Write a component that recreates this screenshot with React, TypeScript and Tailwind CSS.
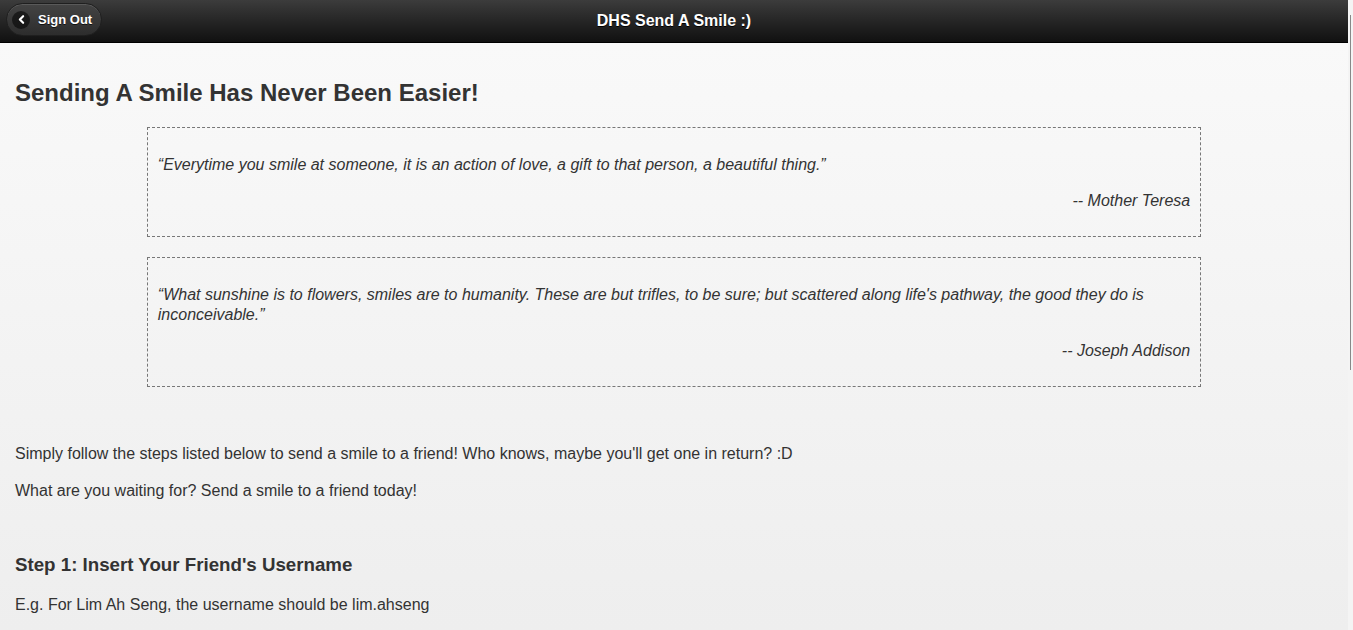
import { ChevronLeft } from "lucide-react";

const quotes = [
  {
    text: "\u201cEverytime you smile at someone, it is an action of love, a gift to that person, a beautiful thing.\u201d",
    author: "-- Mother Teresa",
  },
  {
    text: "\u201cWhat sunshine is to flowers, smiles are to humanity. These are but trifles, to be sure; but scattered along life's pathway, the good they do is inconceivable.\u201d",
    author: "-- Joseph Addison",
  },
];

export default function App() {
  return (
    <div className="flex h-[630px] overflow-hidden font-['Liberation_Sans',Arial,sans-serif] bg-[#f6f6f6]">
      <div className="flex-1 flex flex-col min-w-0">
        {/* Header */}
        <header className="relative h-[43px] shrink-0 bg-gradient-to-b from-[#3c3c3c] to-[#111111] border-b border-black flex items-center justify-center">
          <button className="absolute left-[6px] top-[3px] h-[33px] w-[96px] rounded-full border border-[#1f1f1f] bg-gradient-to-b from-[#444444] to-[#2d2d2d] shadow-[inset_0_1px_0_rgba(255,255,255,0.12)] flex items-center pl-[5px] gap-[8px]">
            <span className="w-[18px] h-[18px] rounded-full bg-[rgba(0,0,0,0.55)] flex items-center justify-center">
              <ChevronLeft className="w-[13px] h-[13px] text-white" strokeWidth={4} />
            </span>
            <span className="text-white text-[13px] font-bold [text-shadow:0_1px_0_#111]">Sign Out</span>
          </button>
          <h1 className="text-white text-[16px] font-bold [text-shadow:0_1px_0_#000]">DHS Send A Smile :)</h1>
        </header>

        {/* Content */}
        <main className="flex-1 bg-gradient-to-b from-[#f9f9f9] to-[#eeeeee] px-[15px] text-[#333333]">
          <h2 className="text-[24px] font-bold mt-[36px] leading-[28px]">Sending A Smile Has Never Been Easier!</h2>

          <div className="flex flex-col gap-[20px] mt-[20px]">
            {quotes.map((q) => (
              <blockquote key={q.author} className="w-[80%] mx-auto border border-dashed border-[#777777] px-[10px] pt-[27px] pb-[25px] italic text-[16px] leading-[20px]">
                <p>{q.text}</p>
                <p className="text-right mt-[16px]">{q.author}</p>
              </blockquote>
            ))}
          </div>

          <div className="mt-[57px] text-[16px] leading-[20px] flex flex-col gap-[17px]">
            <p>Simply follow the steps listed below to send a smile to a friend! Who knows, maybe you'll get one in return? :D</p>
            <p>What are you waiting for? Send a smile to a friend today!</p>
          </div>

          <h3 className="mt-[53px] text-[18.72px] font-bold leading-[22px]">Step 1: Insert Your Friend's Username</h3>
          <p className="mt-[19px] text-[16px] leading-[20px]">E.g. For Lim Ah Seng, the username should be lim.ahseng</p>
        </main>
      </div>

      {/* Scrollbar strip */}
      <div className="w-[5px] shrink-0 bg-[#f4f4f4] flex pt-[15px]">
        <div className="ml-[2px] w-px h-[355px] bg-[#888888]" />
      </div>
    </div>
  );
}
